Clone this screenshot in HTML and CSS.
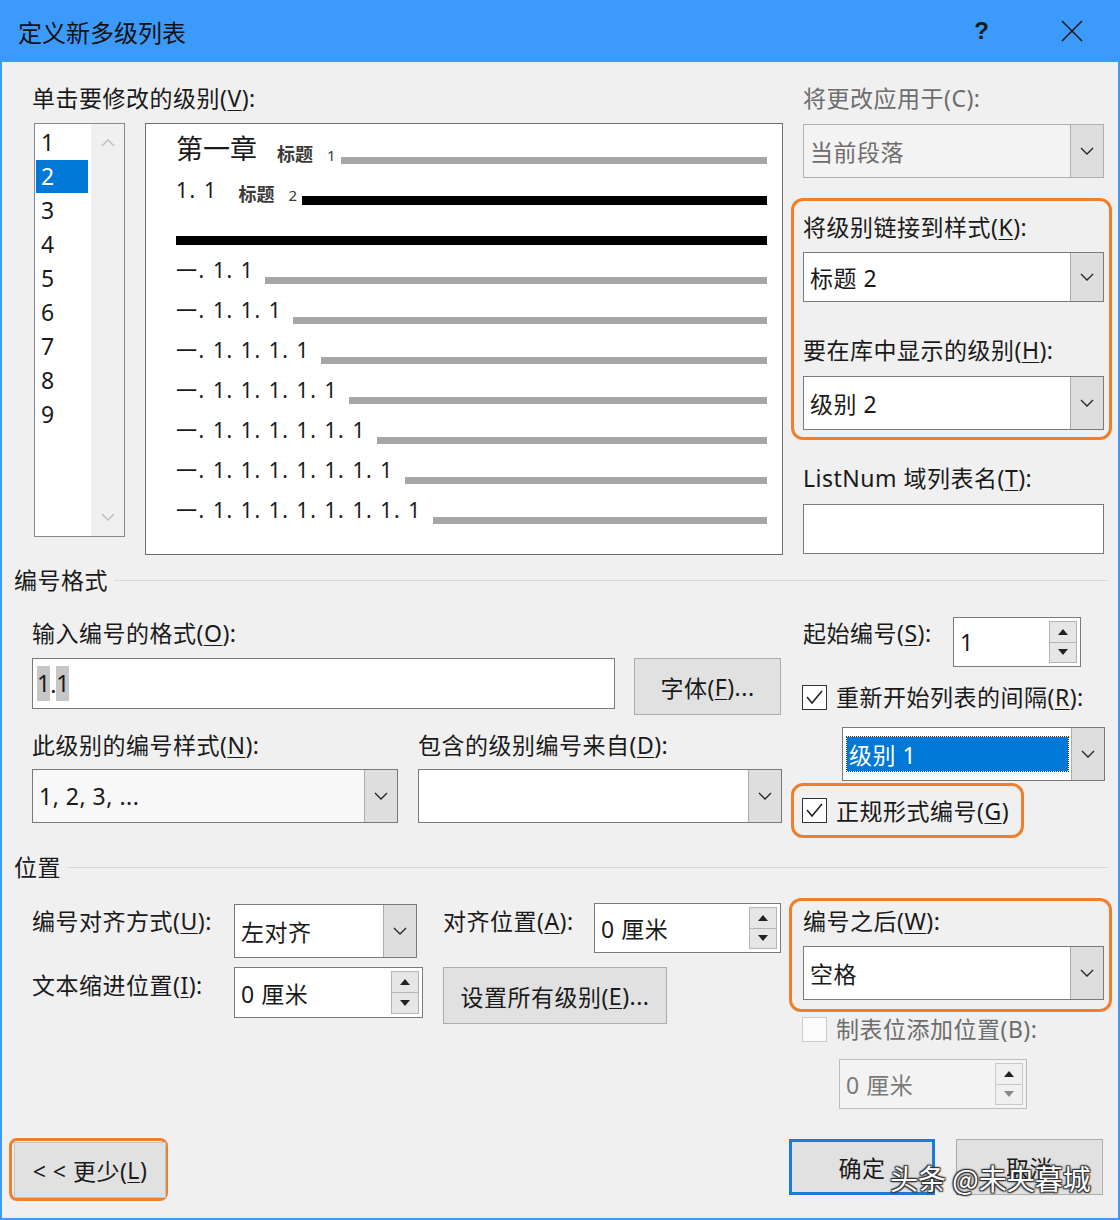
FILE: index.html
```html
<!DOCTYPE html>
<html lang="zh-CN">
<head>
    <meta charset="UTF-8">
    <title>定义新多级列表</title>
    <link rel="stylesheet" href="styles.css">
</head>
<body>
<div class="dialog">

    <!-- 标题栏 -->
    <div class="title-bar">
        <span class="title">定义新多级列表</span>
        <span class="help">?</span>
        <svg class="close" width="22" height="22" viewBox="0 0 22 22">
            <path d="M1 1 L21 21 M21 1 L1 21" stroke="#1a1a1a" stroke-width="1.6" fill="none"/>
        </svg>
    </div>

    <div class="content">

        <!-- 级别 + 预览 -->
        <div class="top-section">
            <div class="top-left">
                <div class="label">单击要修改的级别(<u>V</u>):</div>
                <div class="level-row">
                    <div class="level-list">
                        <ul class="levels">
                            <li>1</li>
                            <li class="selected">2</li>
                            <li>3</li>
                            <li>4</li>
                            <li>5</li>
                            <li>6</li>
                            <li>7</li>
                            <li>8</li>
                            <li>9</li>
                        </ul>
                        <div class="scrollbar">
                            <svg width="14" height="8" viewBox="0 0 14 8"><path d="M1 7 L7 1 L13 7" stroke="#c2c2c2" stroke-width="1.6" fill="none"/></svg>
                            <svg width="14" height="8" viewBox="0 0 14 8"><path d="M1 1 L7 7 L13 1" stroke="#c2c2c2" stroke-width="1.6" fill="none"/></svg>
                        </div>
                    </div>
                    <div class="preview">
                        <div class="pv-row">
                            <span class="pv-chapter">第一章</span>
                            <span class="pv-tag">标题<span class="pv-tag-num">1</span></span>
                            <span class="pv-line after-tag"></span>
                        </div>
                        <div class="pv-row">
                            <span class="pv-num">1. 1</span>
                            <span class="pv-tag tag-2">标题<span class="pv-tag-num">2</span></span>
                            <span class="pv-line dark after-tag"></span>
                        </div>
                        <div class="pv-row">
                            <span class="pv-line dark full"></span>
                        </div>
                        <div class="pv-row"><span class="pv-num">一. 1. 1</span><span class="pv-line"></span></div>
                        <div class="pv-row"><span class="pv-num">一. 1. 1. 1</span><span class="pv-line"></span></div>
                        <div class="pv-row"><span class="pv-num">一. 1. 1. 1. 1</span><span class="pv-line"></span></div>
                        <div class="pv-row"><span class="pv-num">一. 1. 1. 1. 1. 1</span><span class="pv-line"></span></div>
                        <div class="pv-row"><span class="pv-num">一. 1. 1. 1. 1. 1. 1</span><span class="pv-line"></span></div>
                        <div class="pv-row"><span class="pv-num">一. 1. 1. 1. 1. 1. 1. 1</span><span class="pv-line"></span></div>
                        <div class="pv-row"><span class="pv-num">一. 1. 1. 1. 1. 1. 1. 1. 1</span><span class="pv-line"></span></div>
                    </div>
                </div>
            </div>

            <div class="side">
                <div class="label disabled">将更改应用于(C):</div>
                <div class="select disabled apply-to">
                    <span class="value">当前段落</span>
                    <span class="arrow"><svg width="14" height="8" viewBox="0 0 14 8"><path d="M1 1 L7 7 L13 1" stroke="#222" stroke-width="1.3" fill="none"/></svg></span>
                </div>
                <div class="mark link-box">
                    <div class="label">将级别链接到样式(<u>K</u>):</div>
                    <div class="select link-style">
                        <span class="value">标题 2</span>
                        <span class="arrow"><svg width="14" height="8" viewBox="0 0 14 8"><path d="M1 1 L7 7 L13 1" stroke="#222" stroke-width="1.3" fill="none"/></svg></span>
                    </div>
                    <div class="label gallery-label">要在库中显示的级别(<u>H</u>):</div>
                    <div class="select gallery-level">
                        <span class="value">级别 2</span>
                        <span class="arrow"><svg width="14" height="8" viewBox="0 0 14 8"><path d="M1 1 L7 7 L13 1" stroke="#222" stroke-width="1.3" fill="none"/></svg></span>
                    </div>
                </div>
                <div class="label listnum-label">ListNum 域列表名(<u>T</u>):</div>
                <div class="textbox listnum"></div>
            </div>
        </div>

        <!-- 编号格式 -->
        <div class="group-title format-title">
            <span>编号格式</span>
            <span class="rule"></span>
        </div>

        <div class="format-section">
            <div class="format-left">
                <div class="label format-label">输入编号的格式(<u>O</u>):</div>
                <div class="format-row">
                    <div class="textbox number-format"><span class="hl">1</span>.<span class="hl">1</span></div>
                    <div class="button font-btn">字体(<u>F</u>)...</div>
                </div>
                <div class="format-labels">
                    <div class="label style-label">此级别的编号样式(<u>N</u>):</div>
                    <div class="label">包含的级别编号来自(<u>D</u>):</div>
                </div>
                <div class="format-selects">
                    <div class="select number-style">
                        <span class="value">1, 2, 3, ...</span>
                        <span class="arrow"><svg width="14" height="8" viewBox="0 0 14 8"><path d="M1 1 L7 7 L13 1" stroke="#222" stroke-width="1.3" fill="none"/></svg></span>
                    </div>
                    <div class="select include-level">
                        <span class="value"></span>
                        <span class="arrow"><svg width="14" height="8" viewBox="0 0 14 8"><path d="M1 1 L7 7 L13 1" stroke="#222" stroke-width="1.3" fill="none"/></svg></span>
                    </div>
                </div>
            </div>

            <div class="format-right">
                <div class="start-row">
                    <div class="label start-label">起始编号(<u>S</u>):</div>
                    <div class="spin start-spin">
                        <span class="value">1</span>
                        <span class="spin-btns">
                            <span class="spin-btn"><svg width="10" height="6" viewBox="0 0 10 6"><path d="M0 6 L5 0 L10 6 Z" fill="#222"/></svg></span>
                            <span class="spin-btn"><svg width="10" height="6" viewBox="0 0 10 6"><path d="M0 0 L5 6 L10 0 Z" fill="#222"/></svg></span>
                        </span>
                    </div>
                </div>
                <div class="check-row restart-row">
                    <span class="checkbox"><svg width="23" height="23" viewBox="0 0 23 23"><path d="M4 11 L9 17 L19 5" stroke="#222" stroke-width="1.6" fill="none"/></svg></span>
                    <span class="label">重新开始列表的间隔(<u>R</u>):</span>
                </div>
                <div class="select restart-level">
                    <span class="value"><span class="selected-text">级别 1</span></span>
                    <span class="arrow"><svg width="14" height="8" viewBox="0 0 14 8"><path d="M1 1 L7 7 L13 1" stroke="#222" stroke-width="1.3" fill="none"/></svg></span>
                </div>
                <div class="mark legal-box">
                    <span class="checkbox"><svg width="23" height="23" viewBox="0 0 23 23"><path d="M4 11 L9 17 L19 5" stroke="#222" stroke-width="1.6" fill="none"/></svg></span>
                    <span class="label">正规形式编号(<u>G</u>)</span>
                </div>
            </div>
        </div>

        <!-- 位置 -->
        <div class="group-title position-title">
            <span>位置</span>
            <span class="rule"></span>
        </div>

        <div class="position-section">
            <div class="position-grid">
                <div class="label row1-label">编号对齐方式(<u>U</u>):</div>
                <div class="select align-select">
                    <span class="value">左对齐</span>
                    <span class="arrow"><svg width="14" height="8" viewBox="0 0 14 8"><path d="M1 1 L7 7 L13 1" stroke="#222" stroke-width="1.3" fill="none"/></svg></span>
                </div>
                <div class="label row1-label">对齐位置(<u>A</u>):</div>
                <div class="spin align-at">
                    <span class="value">0 厘米</span>
                    <span class="spin-btns">
                        <span class="spin-btn"><svg width="10" height="6" viewBox="0 0 10 6"><path d="M0 6 L5 0 L10 6 Z" fill="#222"/></svg></span>
                        <span class="spin-btn"><svg width="10" height="6" viewBox="0 0 10 6"><path d="M0 0 L5 6 L10 0 Z" fill="#222"/></svg></span>
                    </span>
                </div>
                <div class="label row2-label">文本缩进位置(<u>I</u>):</div>
                <div class="spin indent-at">
                    <span class="value">0 厘米</span>
                    <span class="spin-btns">
                        <span class="spin-btn"><svg width="10" height="6" viewBox="0 0 10 6"><path d="M0 6 L5 0 L10 6 Z" fill="#222"/></svg></span>
                        <span class="spin-btn"><svg width="10" height="6" viewBox="0 0 10 6"><path d="M0 0 L5 6 L10 0 Z" fill="#222"/></svg></span>
                    </span>
                </div>
                <div class="button all-levels">设置所有级别(<u>E</u>)...</div>
            </div>

            <div class="position-right">
                <div class="mark follow-box">
                    <div class="label">编号之后(<u>W</u>):</div>
                    <div class="select follow-select">
                        <span class="value">空格</span>
                        <span class="arrow"><svg width="14" height="8" viewBox="0 0 14 8"><path d="M1 1 L7 7 L13 1" stroke="#222" stroke-width="1.3" fill="none"/></svg></span>
                    </div>
                </div>
                <div class="check-row tab-row">
                    <span class="checkbox disabled"></span>
                    <span class="label disabled">制表位添加位置(B):</span>
                </div>
                <div class="spin disabled tab-spin">
                    <span class="value">0 厘米</span>
                    <span class="spin-btns">
                        <span class="spin-btn"><svg width="10" height="6" viewBox="0 0 10 6"><path d="M0 6 L5 0 L10 6 Z" fill="#222"/></svg></span>
                        <span class="spin-btn"><svg width="10" height="6" viewBox="0 0 10 6"><path d="M0 0 L5 6 L10 0 Z" fill="#8a8a8a"/></svg></span>
                    </span>
                </div>
            </div>
        </div>

        <!-- 底部按钮 -->
        <div class="footer">
            <div class="mark less-box">
                <div class="button less-btn">&lt; &lt; 更少(<u>L</u>)</div>
            </div>
            <div class="footer-right">
                <div class="button ok-btn">确定</div>
                <div class="button cancel-btn">取消</div>
            </div>
        </div>
    </div>

    <div class="watermark">头条 @未央暮城</div>
</div>
</body>
</html>
```

FILE: styles.css
```css
/* 整体 */
body {
    margin: 0;
    font-family: "Noto Sans", "Noto Sans CJK SC", sans-serif;
    color: #1a1a1a;
}

u {
    text-decoration-thickness: 1px;
    text-underline-offset: 3px;
}

.dialog {
    position: relative;
    width: 1120px;
    height: 1220px;
    box-sizing: border-box;
    border: 2px solid #3c9afb;
    border-top: none;
    background: #f0f0f0;
    overflow: hidden;
}

/* 标题栏 */
.title-bar {
    height: 62px;
    margin: 0 -2px;
    background: #3c9afb;
    display: flex;
    align-items: center;
    padding-left: 18px;
}

.title {
    font-family: "Noto Sans CJK SC", sans-serif;
    font-size: 24px;
    color: #111;
}

.help {
    margin-left: auto;
    font-size: 24px;
    font-weight: bold;
    color: #1a1a1a;
    font-family: "Liberation Sans", sans-serif;
}

.close {
    margin-left: 72px;
    margin-right: 37px;
}

.content {
    padding: 0 14px 0 30px;
}

.label {
    font-size: 23px;
    line-height: 26px;
    letter-spacing: 0.5px;
    white-space: nowrap;
}

.label.disabled {
    color: #6d6d6d;
}

/* 顶部：级别列表 + 预览 */
.top-section {
    display: flex;
    gap: 20px;
    padding-top: 23px;
}

.top-left {
    width: 751px;
}

.level-row {
    display: flex;
    margin-top: 12px;
}

.level-list {
    width: 91px;
    height: 414px;
    margin-left: 2px;
    box-sizing: border-box;
    border: 1px solid #828790;
    background: #fff;
    display: flex;
}

.levels {
    list-style: none;
    margin: 0;
    padding: 2px 3px 0 1px;
    width: 56px;
    box-sizing: border-box;
}

.levels li {
    height: 33px;
    line-height: 33px;
    margin-bottom: 1px;
    padding-left: 5px;
    font-size: 23px;
}

.levels li.selected {
    background: #0078d7;
    color: #fff;
}

.scrollbar {
    flex: 1;
    background: #f0f0f0;
    display: flex;
    flex-direction: column;
    align-items: center;
    justify-content: space-between;
    padding: 15px 0 15px;
}

.preview {
    width: 638px;
    height: 432px;
    margin-left: 20px;
    box-sizing: border-box;
    border: 1px solid #6e6e6e;
    background: #fff;
    padding: 6px 15px 0 30px;
}

.pv-row {
    height: 40px;
    display: flex;
    align-items: flex-start;
}

.pv-chapter {
    font-family: "Noto Sans CJK SC", sans-serif;
    font-size: 27px;
    line-height: 40px;
    margin-top: -2px;
}

.pv-num {
    font-size: 21px;
    line-height: 40px;
    letter-spacing: 1.6px;
    white-space: pre;
}

.pv-tag {
    font-family: "Noto Sans CJK SC", sans-serif;
    font-size: 18px;
    font-weight: bold;
    color: #3a3a3a;
    line-height: 40px;
    margin-left: 20px;
    margin-top: 3px;
}

.pv-tag.tag-2 {
    margin-left: 21px;
}

.pv-tag-num {
    font-family: "Noto Sans", sans-serif;
    font-weight: normal;
    font-size: 15px;
    margin-left: 14px;
}

.pv-line {
    flex: 1;
    height: 7px;
    margin-top: 27px;
    margin-left: 11px;
    background: #a6a6a6;
}

.pv-line.after-tag {
    margin-left: 5px;
}

.pv-line.dark {
    height: 9px;
    margin-top: 26px;
    background: #000;
}

.pv-line.full {
    margin-left: 0;
}

/* 右侧栏 */
.side {
    width: 301px;
}

.select {
    display: flex;
    box-sizing: border-box;
    border: 1px solid #7a7a7a;
    background: #fff;
    font-size: 23px;
    letter-spacing: 0.5px;
}

.select .value {
    flex: 1;
    display: flex;
    align-items: center;
    padding-left: 6px;
    white-space: nowrap;
}

.select .arrow {
    width: 33px;
    box-sizing: border-box;
    border-left: 1px solid #adadad;
    background: #dedede;
    display: flex;
    align-items: center;
    justify-content: center;
}

.select.disabled {
    background: #f3f3f3;
    border-color: #b0b0b0;
    color: #6d6d6d;
}

.apply-to {
    height: 54px;
    margin-top: 13px;
}

.mark {
    border: 3px solid #ee7f2d;
    border-radius: 12px;
    box-sizing: border-box;
}

.link-box {
    margin: 20px -8px 0 -12px;
    padding: 13px 5px 7px 9px;
}

.link-style {
    height: 50px;
    margin-top: 12px;
}

.gallery-label {
    margin-top: 35px;
}

.gallery-level {
    height: 54px;
    margin-top: 13px;
}

.listnum-label {
    margin-top: 25px;
}

.textbox {
    box-sizing: border-box;
    border: 1px solid #7a7a7a;
    background: #fff;
    font-size: 23px;
}

.listnum {
    height: 50px;
    margin-top: 13px;
}

/* 分组标题 */
.group-title {
    display: flex;
    align-items: center;
    font-size: 23px;
    letter-spacing: 0.5px;
    line-height: 26px;
    margin: 12px -4px 0 -18px;
}

.group-title .rule {
    flex: 1;
    height: 1px;
    background: #d9d9d9;
    margin-left: 6px;
}

/* 编号格式 */
.format-section {
    display: flex;
    gap: 20px;
    margin-top: 24px;
}

.format-left {
    width: 751px;
}

.format-label {
    margin-top: 3px;
}

.format-row {
    display: flex;
    align-items: flex-start;
    margin-top: 12px;
}

.number-format {
    width: 583px;
    height: 51px;
    display: flex;
    align-items: center;
    padding-left: 4px;
    font-size: 23px;
}

.hl {
    background: #c6c6c6;
    line-height: 35px;
}

.button {
    box-sizing: border-box;
    border: 1px solid #adadad;
    background: #e1e1e1;
    display: flex;
    align-items: center;
    justify-content: center;
    font-size: 23px;
    letter-spacing: 0.5px;
    white-space: nowrap;
}

.font-btn {
    width: 147px;
    height: 57px;
    margin-left: 19px;
}

.format-labels {
    display: flex;
    margin-top: 17px;
}

.style-label {
    width: 386px;
}

.format-selects {
    display: flex;
    gap: 20px;
    margin-top: 11px;
}

.number-style {
    width: 366px;
    height: 54px;
    background: #f8f8f8;
}

.include-level {
    width: 364px;
    height: 54px;
}

.format-right {
    width: 301px;
}

.start-row {
    display: flex;
    align-items: flex-start;
}

.start-label {
    width: 150px;
    margin-top: 3px;
}

.spin {
    display: flex;
    box-sizing: border-box;
    border: 1px solid #7a7a7a;
    background: #fff;
    font-size: 23px;
    letter-spacing: 0.5px;
}

.spin .value {
    flex: 1;
    display: flex;
    align-items: center;
    padding-left: 6px;
    white-space: nowrap;
}

.spin-btns {
    width: 28px;
    margin: 3px 3px 3px 0;
    display: flex;
    flex-direction: column;
}

.spin-btn {
    flex: 1;
    box-sizing: border-box;
    border: 1px solid #b4b4b4;
    background: #e6e6e6;
    display: flex;
    align-items: center;
    justify-content: center;
}

.spin-btn + .spin-btn {
    border-top: none;
}

.start-spin {
    width: 128px;
    height: 50px;
}

.check-row {
    display: flex;
    align-items: center;
    gap: 9px;
}

.checkbox {
    width: 25px;
    height: 25px;
    box-sizing: border-box;
    border: 1px solid #333;
    background: #fff;
    display: flex;
    align-items: center;
    justify-content: center;
}

.checkbox.disabled {
    border-color: #cccccc;
    background: #fbfbfb;
}

.restart-row {
    margin-top: 17px;
    margin-left: -1px;
}

.restart-level {
    width: 263px;
    height: 54px;
    margin: 17px 0 0 39px;
}

.restart-level .value {
    padding: 9px 3px 9px 4px;
}

.selected-text {
    flex: 1;
    align-self: stretch;
    display: flex;
    align-items: center;
    background: #0078d7;
    color: #fff;
    outline: 1px dotted #333;
    padding-left: 2px;
}

.legal-box {
    width: 233px;
    height: 55px;
    margin: 2px 0 0 -12px;
    padding-left: 8px;
    display: flex;
    align-items: center;
    gap: 9px;
}

/* 位置 */
.position-title {
    margin-top: 16px;
}

.position-section {
    display: flex;
    gap: 20px;
    margin-top: 18px;
}

.position-grid {
    width: 751px;
    padding-top: 6px;
    display: grid;
    grid-template-columns: 202px 209px 151px 189px;
    grid-template-rows: 54px 57px;
    row-gap: 9px;
    align-items: start;
}

.row1-label {
    margin-top: 4px;
}

.row2-label {
    margin-top: 5px;
}

.align-select {
    width: 183px;
    height: 54px;
}

.align-at {
    width: 187px;
    height: 50px;
    margin-top: -1px;
}

.indent-at {
    width: 189px;
    height: 51px;
}

.all-levels {
    grid-column: 3 / 5;
    width: 224px;
    height: 57px;
}

.position-right {
    width: 301px;
}

.follow-box {
    height: 114px;
    margin: 0 -8px 0 -14px;
    padding: 7px 5px 0 11px;
}

.follow-select {
    height: 54px;
    margin-top: 12px;
}

.tab-row {
    margin-top: 4px;
    margin-left: -1px;
}

.tab-spin {
    width: 188px;
    height: 50px;
    margin: 17px 0 0 36px;
}

.spin.disabled {
    background: #f3f3f3;
    border-color: #bdbdbd;
    color: #7a7a7a;
}

.spin.disabled .spin-btn {
    background: #f0f0f0;
    border-color: #c8c8c8;
}

/* 底部 */
.footer {
    display: flex;
    align-items: flex-start;
    margin-top: 29px;
}

.less-box {
    width: 159px;
    height: 63px;
    margin-left: -23px;
    border-radius: 8px;
    padding-top: 1px;
}

.less-btn {
    width: 152px;
    height: 56px;
    margin-left: 2px;
    border-color: #c4c4c4;
}

.footer-right {
    margin-left: auto;
    margin-right: 1px;
    display: flex;
    gap: 21px;
    margin-top: 1px;
}

.ok-btn {
    width: 146px;
    height: 56px;
    border: 3px solid #1a7bd8;
}

.cancel-btn {
    width: 147px;
    height: 56px;
}

/* 水印 */
.watermark {
    position: absolute;
    left: 888px;
    top: 1158px;
    font-family: "Noto Sans CJK SC", sans-serif;
    font-size: 28px;
    line-height: 40px;
    color: #fff;
    text-shadow: -1px -1px 1px #333, 1px -1px 1px #333, -1px 1px 1px #333, 1px 1px 1px #333, 0 0 3px #333;
    white-space: nowrap;
}
```
